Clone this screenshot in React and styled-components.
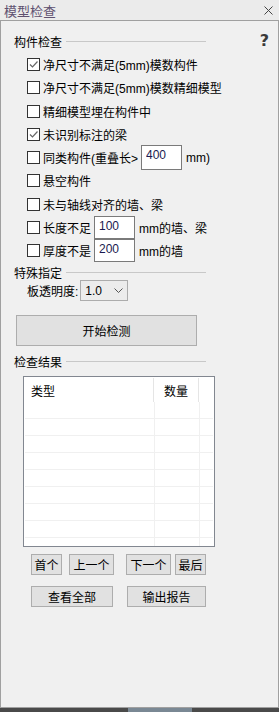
import React from 'react'
import styled, { createGlobalStyle } from 'styled-components'

const GlobalStyle = createGlobalStyle`
  html, body {
    margin: 0;
    padding: 0;
    background: #f0f0f0;
  }
  body {
    font-family: "Liberation Sans", "Noto Sans CJK SC", sans-serif;
    font-size: 12px;
    color: #000;
  }
  * { box-sizing: border-box; }
`

const Window = styled.div`
  width: 279px;
  height: 712px;
  display: flex;
  flex-direction: column;
  overflow: hidden;
`

const TitleBar = styled.div`
  flex: none;
  height: 20px;
  display: flex;
  align-items: center;
  justify-content: space-between;
  padding: 0 6px 0 4px;
  background: #ebebeb;
  color: #5f5170;
  font-size: 13px;
`

const Body = styled.div`
  flex: 1;
  display: flex;
  flex-direction: column;
  border: 1px solid #a0a0a0;
  background: #f0f0f0;
  padding: 12px 9px 0 13px;
`

const BottomBar = styled.div`
  flex: none;
  height: 4px;
  background: #4a4a4a;
  display: flex;
  padding-left: 128px;
`

const BottomThumb = styled.div`
  width: 64px;
  background: #7a8894;
`

const GroupHeader = styled.div`
  display: flex;
  align-items: center;
  height: 16px;
  margin-top: ${p => p.$mt || 0}px;
`

const GroupLine = styled.div`
  width: 140px;
  height: 1px;
  margin-left: 4px;
  background: #c8c8c8;
`

const HelpIcon = styled.span`
  margin-left: auto;
  font-family: "DejaVu Sans", sans-serif;
  font-weight: bold;
  font-size: 16px;
  line-height: 16px;
  color: #3a3a3a;
`

const CheckList = styled.div`
  display: flex;
  flex-direction: column;
  margin: 4px 0 0 13px;
`

const CheckRow = styled.div`
  display: flex;
  align-items: center;
  height: 23.25px;
  white-space: nowrap;
`

const Box = styled.span`
  flex: none;
  width: 13px;
  height: 13px;
  margin-right: 3px;
  border: 1px solid #333;
  background: #fff;
  display: flex;
  align-items: center;
  justify-content: center;
`

const NumInput = styled.input`
  width: 41px;
  height: ${p => p.$h}px;
  margin: 0 4px 0 3px;
  padding: 0 0 ${p => p.$lift}px 4px;
  border: 1px solid #7a7a7a;
  background: #fff;
  font: 12px "Liberation Sans", sans-serif;
  color: #1a1a50;
  outline: none;
`

const SelectRow = styled.div`
  display: flex;
  align-items: center;
  height: 21px;
  margin-left: 13px;
`

const Combo = styled.div`
  width: 48px;
  height: 21px;
  margin-left: 2px;
  border: 1px solid #acacac;
  background: #ececec;
  display: flex;
  align-items: center;
  justify-content: space-between;
  padding: 0 4px 0 4px;
  font-family: "Liberation Sans", sans-serif;
`

const StartButton = styled.button`
  width: 181px;
  height: 31px;
  margin: 14px 0 0 2px;
  border: 1px solid #adadad;
  background: #e1e1e1;
  font: 12px "Liberation Sans", "Noto Sans CJK SC", sans-serif;
  color: #000;
`

const Table = styled.div`
  width: 192px;
  height: 171px;
  margin: 7px 0 0 9px;
  border: 1px solid #828790;
  background: #fff;
  overflow: hidden;
`

const HeaderRow = styled.div`
  display: grid;
  grid-template-columns: 130px 45px 1fr;
  height: 25px;
  padding-top: 1px;
`

const HeaderCell = styled.div`
  display: flex;
  align-items: center;
  justify-content: ${p => (p.$center ? 'center' : 'flex-start')};
  padding-left: ${p => (p.$center ? 0 : 7)}px;
  border-right: ${p => (p.$last ? 'none' : '1px solid #e5e5e5')};
`

const DataRow = styled.div`
  display: grid;
  grid-template-columns: 130px 45px 1fr;
  height: 17px;
  margin: 0 1px;
  border-bottom: 1px solid #f0f0f0;
`

const DataCell = styled.div`
  border-right: ${p => (p.$last ? 'none' : '1px solid #f0f0f0')};
`

const ButtonRow = styled.div`
  display: flex;
  margin: ${p => p.$mt}px 0 0 17px;
`

const SmallButton = styled.button`
  width: ${p => p.$w}px;
  height: 21px;
  margin-left: ${p => p.$ml || 0}px;
  padding: 0;
  border: 1px solid #adadad;
  background: #e1e1e1;
  font: 12px "Liberation Sans", "Noto Sans CJK SC", sans-serif;
  color: #000;
`

const CheckMark = () => (
  <svg width="11" height="11" viewBox="0 0 11 11">
    <path d="M2 5.5 L4.5 8 L9.5 2.5" fill="none" stroke="#666" strokeWidth="1.2" />
  </svg>
)

const Check = ({ checked, children }) => (
  <CheckRow>
    <Box>{checked && <CheckMark />}</Box>
    {children}
  </CheckRow>
)

const CloseIcon = () => (
  <svg width="9" height="9" viewBox="0 0 9 9">
    <path d="M0.5 0.5 L8.5 8.5 M8.5 0.5 L0.5 8.5" stroke="#444" strokeWidth="1" />
  </svg>
)

const Chevron = () => (
  <svg width="9" height="5" viewBox="0 0 9 5">
    <path d="M0.5 0.5 L4.5 4.5 L8.5 0.5" fill="none" stroke="#555" strokeWidth="1" />
  </svg>
)

const App = () => (
  <Window>
    <GlobalStyle />
    <TitleBar>
      <span>模型检查</span>
      <CloseIcon />
    </TitleBar>
    <Body>
      <GroupHeader>
        构件检查
        <GroupLine />
        <HelpIcon>?</HelpIcon>
      </GroupHeader>
      <CheckList>
        <Check checked>净尺寸不满足(5mm)模数构件</Check>
        <Check>净尺寸不满足(5mm)模数精细模型</Check>
        <Check>精细模型埋在构件中</Check>
        <Check checked>未识别标注的梁</Check>
        <Check>
          同类构件(重叠长&gt;
          <NumInput $h={25} $lift={5} defaultValue="400" />
          mm)
        </Check>
        <Check>悬空构件</Check>
        <Check>未与轴线对齐的墙、梁</Check>
        <Check>
          长度不足
          <NumInput $h={23} $lift={3} defaultValue="100" />
          mm的墙、梁
        </Check>
        <Check>
          厚度不是
          <NumInput $h={23} $lift={3} defaultValue="200" />
          mm的墙
        </Check>
      </CheckList>
      <GroupHeader $mt={2}>
        特殊指定
        <GroupLine />
      </GroupHeader>
      <SelectRow>
        板透明度:
        <Combo>
          1.0
          <Chevron />
        </Combo>
      </SelectRow>
      <StartButton>开始检测</StartButton>
      <GroupHeader $mt={7}>
        检查结果
        <GroupLine />
      </GroupHeader>
      <Table>
        <HeaderRow>
          <HeaderCell>类型</HeaderCell>
          <HeaderCell $center>数量</HeaderCell>
          <HeaderCell $last />
        </HeaderRow>
        {Array.from({ length: 9 }).map((_, i) => (
          <DataRow key={i}>
            <DataCell />
            <DataCell />
            <DataCell $last />
          </DataRow>
        ))}
      </Table>
      <ButtonRow $mt={7}>
        <SmallButton $w={31}>首个</SmallButton>
        <SmallButton $w={45} $ml={7}>上一个</SmallButton>
        <SmallButton $w={45} $ml={12}>下一个</SmallButton>
        <SmallButton $w={31} $ml={4}>最后</SmallButton>
      </ButtonRow>
      <ButtonRow $mt={11}>
        <SmallButton $w={82}>查看全部</SmallButton>
        <SmallButton $w={79} $ml={14}>输出报告</SmallButton>
      </ButtonRow>
    </Body>
    <BottomBar>
      <BottomThumb />
    </BottomBar>
  </Window>
)

export default App
